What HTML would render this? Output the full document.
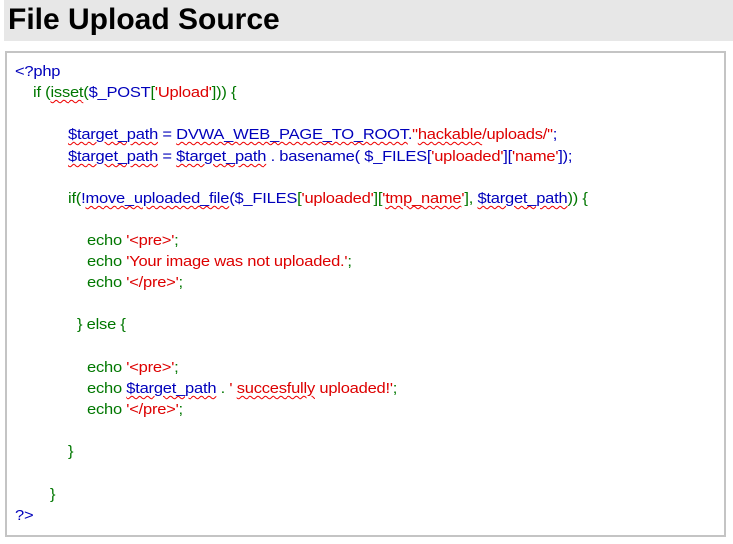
<!DOCTYPE html>
<html><head><meta charset="utf-8"><style>
*{margin:0;padding:0}
body{width:733px;height:544px;background:#fff;position:relative;overflow:hidden;font-family:"Liberation Sans",Arial,sans-serif}
.t{position:absolute;left:4px;top:0;width:729px;height:41px;background:#e7e7e7}
.t h1{position:absolute;left:4px;top:2px;font-size:30px;font-weight:bold;color:#000;line-height:36px}
.box{position:absolute;left:5px;top:51px;width:717px;height:482px;border:2px solid #c4c4c4}
.l{position:absolute;font-size:15px;line-height:18px;white-space:pre;letter-spacing:-0.2px;transform:scaleX(1.1);transform-origin:left}
.b{color:#0000bb}.g{color:#007700}.r{color:#dd0000}
.w{text-decoration:underline wavy #e00;text-decoration-thickness:1px;text-underline-offset:2px}
</style></head><body>
<div class="t"><h1>File Upload Source</h1></div>
<div class="box"></div>
<div class="l b" style="left:15px;top:63px">&lt;?php</div>
<div class="l g" style="left:33px;top:84px">if (<span class="w">isset</span>(<span class="b">$_POST</span>[<span class="r">'Upload'</span>])) {</div>
<div class="l b" style="left:68px;top:126px"><span class="w">$target_path</span> = <span class="w">DVWA_WEB_PAGE_TO_ROOT</span>.<span class="r">"<span class="w">hackable</span>/uploads/"</span>;</div>
<div class="l b" style="left:68px;top:148px"><span class="w">$target_path</span> = <span class="w">$target_path</span> . basename( $_FILES[<span class="r">'uploaded'</span>][<span class="r">'name'</span>]);</div>
<div class="l g" style="left:68px;top:190px">if(<span class="b">!<span class="w">move_uploaded_file</span>($_FILES</span>[<span class="r">'uploaded'</span>][<span class="r">'<span class="w">tmp_name</span>'</span>], <span class="b"><span class="w">$target_path</span></span>)) {</div>
<div class="l g" style="left:87px;top:232px">echo <span class="r">'&lt;pre&gt;'</span>;</div>
<div class="l g" style="left:87px;top:253px">echo <span class="r">'Your image was not uploaded.'</span>;</div>
<div class="l g" style="left:87px;top:274px">echo <span class="r">'&lt;/pre&gt;'</span>;</div>
<div class="l g" style="left:77px;top:316px">} else {</div>
<div class="l g" style="left:87px;top:359px">echo <span class="r">'&lt;pre&gt;'</span>;</div>
<div class="l g" style="left:87px;top:380px">echo <span class="b"><span class="w">$target_path</span></span> . <span class="r">' <span class="w">succesfully</span> uploaded!'</span>;</div>
<div class="l g" style="left:87px;top:401px">echo <span class="r">'&lt;/pre&gt;'</span>;</div>
<div class="l g" style="left:68px;top:443px">}</div>
<div class="l g" style="left:50px;top:486px">}</div>
<div class="l b" style="left:15px;top:507px">?&gt;</div>
</body></html>
